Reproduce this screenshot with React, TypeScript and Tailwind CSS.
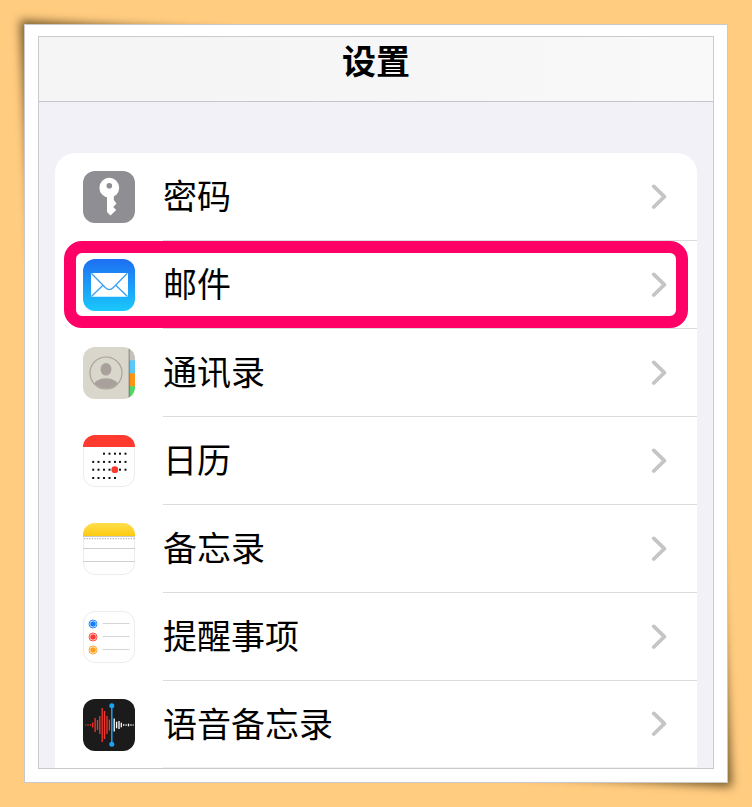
import React from "react";

function PasswordsIcon() {
  return (
    <svg viewBox="0 0 52 52" className="size-[52px]" aria-hidden="true">
      <rect width="52" height="52" rx="12" fill="#8e8e93" />
      <path d="M24 24h6.8v5l2.7 3.4-3.3 3.5 3 3.1-5.7 5.5-3.5-3.6Z" fill="#fff" />
      <circle cx="26.3" cy="16.7" r="9.9" fill="#fff" />
      <circle cx="26.3" cy="14.7" r="2.8" fill="#8e8e93" />
    </svg>
  );
}

function MailIcon() {
  return (
    <svg viewBox="0 0 52 52" className="size-[52px]" aria-hidden="true">
      <defs>
        <linearGradient id="mail-sky" x1="0" y1="0" x2="0" y2="1">
          <stop offset="0" stopColor="#1d6ff2" />
          <stop offset="1" stopColor="#1ac8fc" />
        </linearGradient>
      </defs>
      <rect width="52" height="52" rx="12" fill="url(#mail-sky)" />
      <rect x="8" y="14" width="37" height="23.7" rx="1.2" fill="#fff" />
      <g fill="none" stroke="#3aa0f5" strokeWidth="1.3">
        <path d="M8.6 14.5 22.5 28.7c2.4 2.4 5.2 2.4 7.6 0l14-14.2" />
        <path d="m8.6 37.3 11.4-11M44.2 37.3l-11.4-11" />
      </g>
    </svg>
  );
}

function ContactsIcon() {
  return (
    <svg viewBox="0 0 52 52" className="size-[52px]" aria-hidden="true">
      <defs>
        <clipPath id="contacts-tile">
          <rect width="52" height="52" rx="12" />
        </clipPath>
        <clipPath id="contacts-face">
          <circle cx="23" cy="26" r="15.4" />
        </clipPath>
        <linearGradient id="contacts-edge" x1="0" y1="0" x2="1" y2="0">
          <stop offset="0" stopColor="#000" stopOpacity=".35" />
          <stop offset="1" stopColor="#000" stopOpacity="0" />
        </linearGradient>
      </defs>
      <g clipPath="url(#contacts-tile)">
        <rect width="52" height="52" fill="#d9d6cc" />
        <rect x="46" width="6" height="14" fill="#c5c2bb" />
        <rect x="46" y="13.3" width="6" height="13.5" fill="#58c8fa" />
        <rect x="46" y="26.3" width="6" height="13.5" fill="#fe9412" />
        <rect x="46" y="39.3" width="6" height="13" fill="#4cd964" />
        <rect x="45.6" width="2" height="52" fill="url(#contacts-edge)" />
        <g clipPath="url(#contacts-face)" fill="#a8a19b">
          <ellipse cx="23" cy="22.3" rx="5.4" ry="6.3" />
          <ellipse cx="23" cy="39.5" rx="12.8" ry="8.3" />
        </g>
        <circle cx="23" cy="26" r="16" fill="none" stroke="#a8a19b" strokeWidth="1.2" />
      </g>
    </svg>
  );
}

const calendarDots = [
  { y: 18.7, xs: [21, 26.5, 32, 37, 42.5] },
  { y: 26.9, xs: [10.2, 15.5, 21, 26.5, 32, 37, 42.5] },
  { y: 34.7, xs: [10.2, 15.5, 21, 26.5, 37, 42.5] },
  { y: 43, xs: [10.2, 15.5, 21, 26.5, 32] },
];

function CalendarIcon() {
  return (
    <svg viewBox="0 0 52 52" className="size-[52px]" aria-hidden="true">
      <rect x=".5" y=".5" width="51" height="51" rx="11.5" fill="#fff" stroke="#ececee" />
      <path d="M0 12V12A12 12 0 0 1 12 0h28a12 12 0 0 1 12 12Z" fill="#ff3b30" />
      {calendarDots.map((row) =>
        row.xs.map((x) => (
          <rect key={`${row.y}-${x}`} x={x - 1} y={row.y - 1} width="2" height="2" fill="#111" />
        )),
      )}
      <circle cx="31.8" cy="34.7" r="3.4" fill="#ff3b30" />
    </svg>
  );
}

function NotesIcon() {
  return (
    <svg viewBox="0 0 52 52" className="size-[52px]" aria-hidden="true">
      <defs>
        <linearGradient id="notes-band" x1="0" y1="0" x2="0" y2="1">
          <stop offset="0" stopColor="#ffdf4d" />
          <stop offset="1" stopColor="#fdca10" />
        </linearGradient>
      </defs>
      <rect x=".5" y=".5" width="51" height="51" rx="11.5" fill="#fff" stroke="#ececee" />
      <path d="M0 13V12A12 12 0 0 1 12 0h28a12 12 0 0 1 12 12v1Z" fill="url(#notes-band)" />
      <path d="M0 13.5h52" stroke="#c9c7c9" strokeWidth="1.1" />
      <path d="M1 15.6h51" stroke="#b4b4b6" strokeWidth="1.2" strokeDasharray="1.3 1.3" />
      <path d="M0 25.5h52M0 38.5h52" stroke="#cfcfd1" />
    </svg>
  );
}

const reminders = [
  { y: 13, color: "#157efb" },
  { y: 26, color: "#fe3b30" },
  { y: 39, color: "#fd9d1b" },
];

function RemindersIcon() {
  return (
    <svg viewBox="0 0 52 52" className="size-[52px]" aria-hidden="true">
      <rect x=".5" y=".5" width="51" height="51" rx="11.5" fill="#fff" stroke="#ececee" />
      {reminders.map(({ y, color }) => (
        <g key={color}>
          <circle cx="10" cy={y} r="2.8" fill={color} />
          <circle cx="10" cy={y} r="4" fill="none" stroke={color} strokeWidth=".9" />
          <path d={`M19.5 ${y - 0.5}h27`} stroke="#d5d5d8" />
        </g>
      ))}
    </svg>
  );
}

const redBars = [
  { x: 2.5, h: 1 },
  { x: 5, h: 1.4 },
  { x: 7.4, h: 1.4 },
  { x: 9.7, h: 5 },
  { x: 12.1, h: 14 },
  { x: 14.5, h: 10 },
  { x: 16.8, h: 18 },
  { x: 19.2, h: 34 },
  { x: 21.6, h: 28 },
  { x: 24, h: 18 },
  { x: 26.4, h: 11 },
];
const whiteBars = [
  { x: 31.2, h: 13 },
  { x: 33.6, h: 6.5 },
  { x: 36, h: 8 },
  { x: 38.3, h: 4.6 },
  { x: 40.7, h: 1.6 },
  { x: 43.1, h: 1.4 },
  { x: 45.5, h: 2.6 },
  { x: 48, h: 1.4 },
  { x: 50.2, h: 1 },
];

function VoiceMemosIcon() {
  return (
    <svg viewBox="0 0 52 52" className="size-[52px]" aria-hidden="true">
      <rect width="52" height="52" rx="12" fill="#1b1b1c" />
      {redBars.map(({ x, h }) => (
        <rect key={x} x={x - 0.65} y={26 - h / 2} width="1.3" height={h} fill="#f5352c" />
      ))}
      {whiteBars.map(({ x, h }) => (
        <rect key={x} x={x - 0.65} y={26 - h / 2} width="1.3" height={h} fill="#fff" />
      ))}
      <path d="M28.8 6.7v38.6" stroke="#1a9ff0" strokeWidth="1.5" />
      <circle cx="28.8" cy="6.7" r="2.5" fill="#1aa3f5" />
      <circle cx="28.8" cy="45.3" r="2.5" fill="#1aa3f5" />
    </svg>
  );
}

function Chevron() {
  return (
    <svg viewBox="0 0 16 26" className="h-[26px] w-4" fill="none" aria-hidden="true">
      <path d="M2.8 2.4 13.4 12.7 2.8 23" stroke="#c5c5c8" strokeWidth="3.8" strokeLinecap="round" strokeLinejoin="round" />
    </svg>
  );
}

const items = [
  { label: "密码", Icon: PasswordsIcon },
  { label: "邮件", Icon: MailIcon, highlighted: true },
  { label: "通讯录", Icon: ContactsIcon },
  { label: "日历", Icon: CalendarIcon },
  { label: "备忘录", Icon: NotesIcon },
  { label: "提醒事项", Icon: RemindersIcon },
  { label: "语音备忘录", Icon: VoiceMemosIcon },
];

export default function App() {
  return (
    <div className="min-h-screen overflow-hidden bg-[#ffcc80] p-6 font-['Noto_Sans_CJK_SC',sans-serif] text-black">
      <div className="relative isolate">
        {/* Lifted-paper shadows at two opposite corners */}
        <div className="absolute -left-1 -top-1 -z-10 h-60 w-52 blur-[5px]">
          <div className="size-full bg-[#4a3410]/75 [clip-path:polygon(0_0,100%_12px,100%_100%,12px_100%)]" />
        </div>
        <div className="absolute -bottom-1 -right-1 -z-10 h-60 w-52 blur-[5px]">
          <div className="size-full bg-[#4a3410]/75 [clip-path:polygon(0_0,calc(100%-12px)_0,100%_100%,0_calc(100%-12px))]" />
        </div>

        <main className="border border-[#c9c9cc] bg-white px-[13px] pb-[13px] pt-[11px]">
          <div className="overflow-hidden border border-[#cacacc] bg-[#f2f1f7]">
            <header className="h-[65px] border-b border-[#c6c6ca] bg-linear-to-r from-[#f4f5f4] via-[#f6f6f6] to-[#f9f9f9]">
              <h1 className="text-center text-[34px] font-bold leading-[46px]">设置</h1>
            </header>

            <ul className="mx-4 mt-[51px] rounded-t-[20px] bg-white">
              {items.map(({ label, Icon, highlighted }) => (
                <li key={label} className="group relative">
                  <a href="#" className="flex items-center gap-7 pl-7">
                    <Icon />
                    <span className="flex h-[88px] flex-1 items-center justify-between border-b border-[#dcdcde] pr-[30px] group-last:h-[87px] group-last:border-[#f0f0f2]">
                      <span className="pb-[3px] text-[34px] leading-[48px]">{label}</span>
                      <Chevron />
                    </span>
                  </a>
                  {highlighted && (
                    <div className="pointer-events-none absolute inset-x-[9px] bottom-px top-0 rounded-[18px] border-12 border-[#ff0066]" />
                  )}
                </li>
              ))}
            </ul>
          </div>
        </main>
      </div>
    </div>
  );
}
